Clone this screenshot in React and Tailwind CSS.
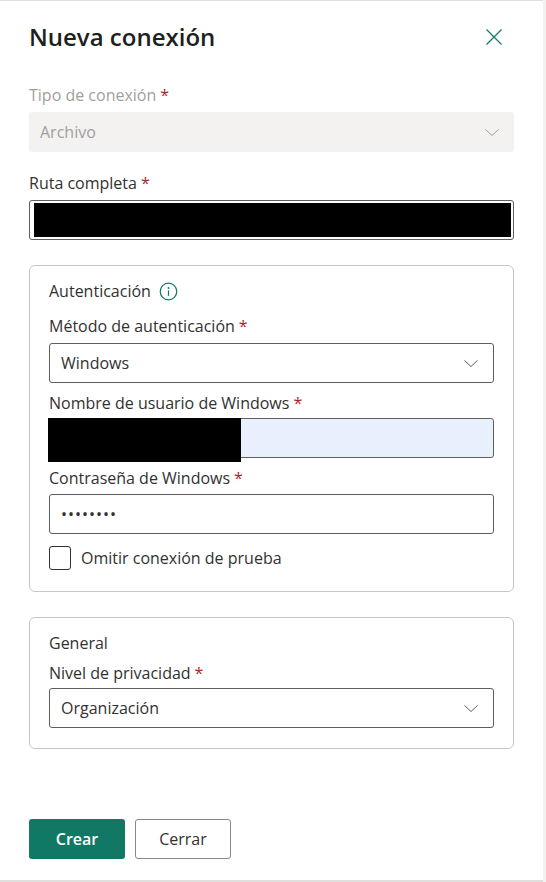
import { useState } from 'react';

const font = "font-['Open_Sans','Noto_Sans',sans-serif]";

const Chevron = ({ className }) => (
  <svg width="16" height="16" viewBox="0 0 16 16" className={className} fill="none">
    <path d="M1.5 5.5 L8 11.5 L14.5 5.5" stroke="currentColor" strokeWidth="1" />
  </svg>
);

const Label = ({ children, disabled, required = true, className = '' }) => (
  <div className={`text-[16px] leading-[22px] font-medium ${disabled ? 'text-[#a19f9d]' : 'text-[#323130]'} ${className}`}>
    {children}
    {required && <span className="ml-1 text-[#a4262c]">*</span>}
  </div>
);

const Select = ({ value, disabled }) => (
  <div
    className={`flex h-[40px] items-center justify-between rounded-[3px] pl-[11px] pr-[14px] text-[16px] ${
      disabled ? 'bg-[#f3f2f1] text-[#a19f9d]' : 'border border-[#605e5c] bg-white text-[#323130]'
    }`}
  >
    <span>{value}</span>
    <Chevron className={disabled ? 'text-[#a19f9d]' : 'text-[#605e5c]'} />
  </div>
);

const App = () => {
  const [skip, setSkip] = useState(false);

  return (
    <div className={`${font} flex h-[882px] w-[546px] bg-white`}>
      <div className="flex h-full w-[543px] flex-col border-t border-b-2 border-[#e1dfdd]">
        <div className="flex items-center justify-between pl-[29px] pr-[40px] pt-[19px]">
          <h2 className="text-[24px] leading-[34px] font-semibold text-[#201f1e]">Nueva conexión</h2>
          <svg width="18" height="18" viewBox="0 0 18 18" className="text-[#117865]">
            <path d="M1.5 1.5 L16.5 16.5 M16.5 1.5 L1.5 16.5" stroke="currentColor" strokeWidth="1.2" />
          </svg>
        </div>

        <div className="px-[29px] pt-[30px]">
          <Label disabled className="mb-[6px]">Tipo de conexión</Label>
          <Select value="Archivo" disabled />

          <Label className="mt-[20px] mb-[6px]">Ruta completa</Label>
          <div className="h-[40px] rounded-[3px] border border-[#605e5c] p-[2px] pl-[4px]">
            <div className="h-full w-full bg-black" />
          </div>

          <div className="mt-[25px] rounded-[6px] border border-[#c8c6c4] px-[19px] pt-[14px] pb-[21px]">
            <div className="flex items-center gap-[8px] text-[16px] leading-[22px] text-[#323130]">
              Autenticación
              <svg width="19" height="19" viewBox="0 0 20 20" fill="none" className="text-[#117865]">
                <circle cx="10" cy="10" r="8.7" stroke="currentColor" strokeWidth="1.3" />
                <circle cx="10" cy="6.3" r="1" fill="currentColor" />
                <path d="M10 8.8 V14.5" stroke="currentColor" strokeWidth="1.3" />
              </svg>
            </div>

            <Label className="mt-[13px] mb-[6px]">Método de autenticación</Label>
            <Select value="Windows" />

            <Label className="mt-[9px] mb-[4px]">Nombre de usuario de Windows</Label>
            <div className="relative h-[40px] rounded-[3px] border border-[#605e5c] bg-[#e8f0fe]">
              <div className="absolute -left-[2px] -top-[1px] h-[44px] w-[193px] bg-black" />
            </div>

            <Label className="mt-[9px] mb-[5px]">Contraseña de Windows</Label>
            <div className="flex h-[40px] items-center rounded-[3px] border border-[#605e5c] bg-white pl-[11px] text-[16px] tracking-[1px] text-[#323130]">
              ••••••••
            </div>

            <label className="mt-[12px] flex cursor-pointer items-center gap-[10px]">
              <input
                type="checkbox"
                checked={skip}
                onChange={() => setSkip(!skip)}
                className="h-[24px] w-[22px] appearance-none rounded-[3px] border border-[#323130] bg-white"
              />
              <span className="text-[16px] text-[#323130]">Omitir conexión de prueba</span>
            </label>
          </div>

          <div className="mt-[25px] rounded-[6px] border border-[#c8c6c4] px-[19px] pt-[14px] pb-[20px]">
            <div className="text-[16px] leading-[22px] text-[#323130]">General</div>
            <Label className="mt-[8px] mb-[4px]">Nivel de privacidad</Label>
            <Select value="Organización" />
          </div>
        </div>

        <div className="mt-auto flex gap-[10px] px-[29px] pb-[21px]">
          <button className="h-[40px] w-[96px] rounded-[3px] bg-[#117865] text-[16px] font-semibold text-white">
            Crear
          </button>
          <button className="h-[40px] w-[96px] rounded-[3px] border border-[#8a8886] bg-white text-[16px] font-medium text-[#323130]">
            Cerrar
          </button>
        </div>
      </div>
      <div className="h-full w-[3px] bg-[#f3f2f1]" />
    </div>
  );
};

export default App;
